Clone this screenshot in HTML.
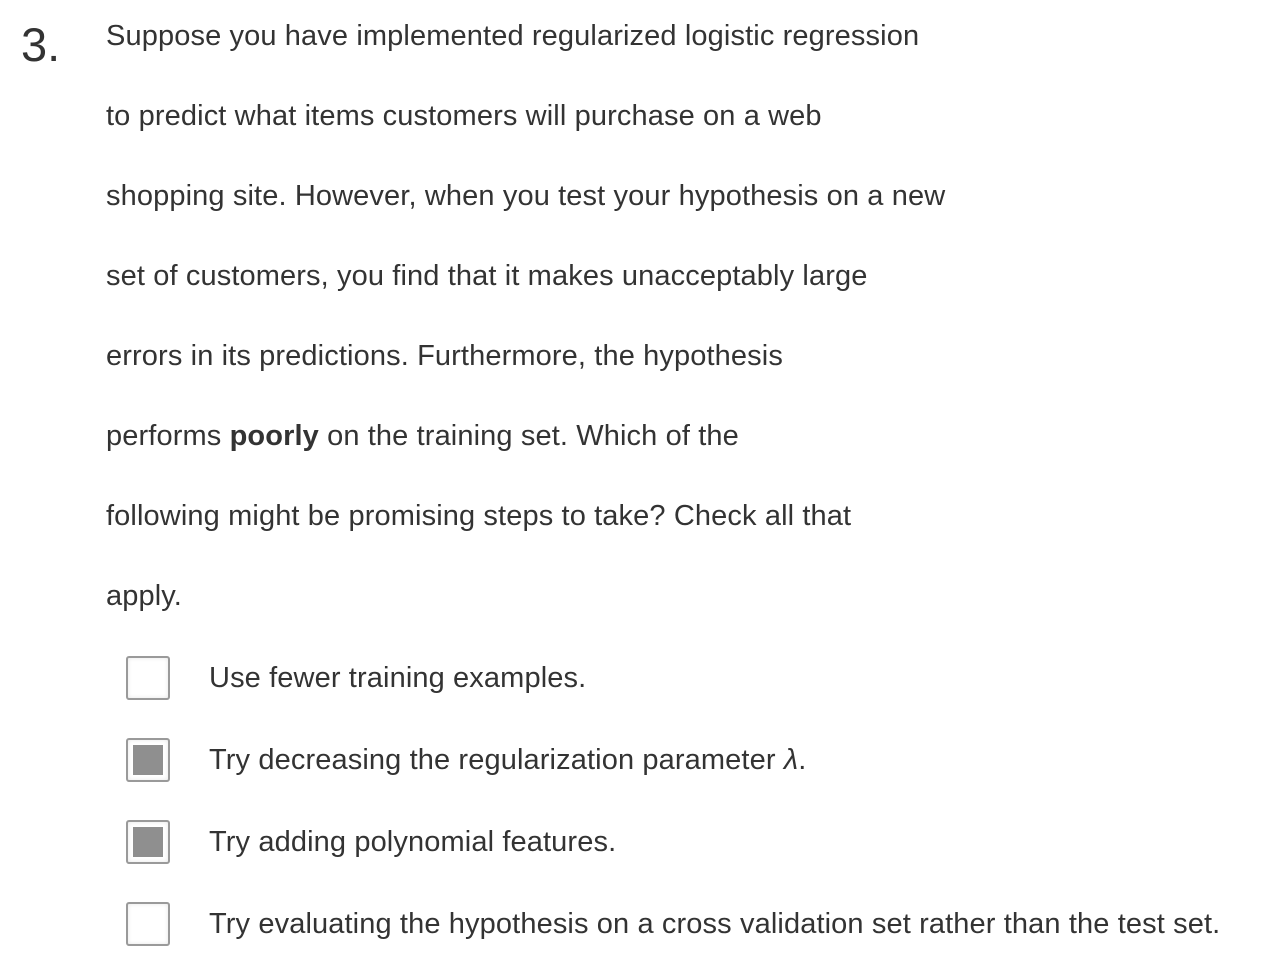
<!DOCTYPE html>
<html><head><style>
body{margin:0;width:1270px;height:978px;background:#fff;position:relative;font-family:"Liberation Sans",sans-serif;color:#333;overflow:hidden}
.num{position:absolute;left:21px;top:15px;font-size:47px;color:#333;line-height:60px}
.p{position:absolute;left:106px;font-size:29px;letter-spacing:0.12px;white-space:nowrap;line-height:40px}
.cb{position:absolute;left:126px;width:40px;height:40px;border:2px solid #9a9a9a;border-radius:3px;background:#fff;box-shadow:inset 0 0 4px #e6e6e6}
.cb.on::after{content:"";position:absolute;left:5px;top:5px;width:30px;height:30px;background:#8f8f8f}
.o{position:absolute;left:209px;font-size:29px;letter-spacing:0.12px;white-space:nowrap;line-height:40px}
</style></head><body>
<div class="num">3.</div>
<div class="p" style="top:16px">Suppose you have implemented regularized logistic regression</div>
<div class="p" style="top:96px">to predict what items customers will purchase on a web</div>
<div class="p" style="top:176px">shopping site. However, when you test your hypothesis on a new</div>
<div class="p" style="top:256px">set of customers, you find that it makes unacceptably large</div>
<div class="p" style="top:336px">errors in its predictions. Furthermore, the hypothesis</div>
<div class="p" style="top:416px">performs <b>poorly</b> on the training set. Which of the</div>
<div class="p" style="top:496px">following might be promising steps to take? Check all that</div>
<div class="p" style="top:576px">apply.</div>
<div class="cb" style="top:656px"></div>
<div class="o" style="top:658px">Use fewer training examples.</div>
<div class="cb on" style="top:738px"></div>
<div class="o" style="top:740px">Try decreasing the regularization parameter <i>λ</i>.</div>
<div class="cb on" style="top:820px"></div>
<div class="o" style="top:822px">Try adding polynomial features.</div>
<div class="cb" style="top:902px"></div>
<div class="o" style="top:904px">Try evaluating the hypothesis on a cross validation set rather than the test set.</div>
</body></html>
